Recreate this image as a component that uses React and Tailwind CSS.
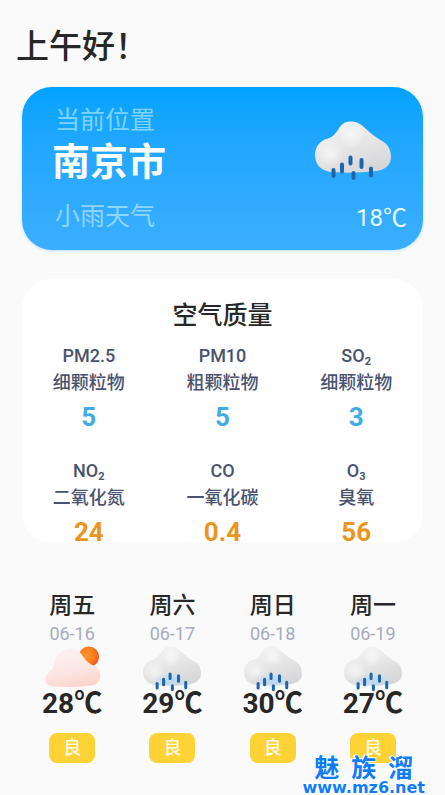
import React from 'react';

const pollutants = [
  { label: 'PM2.5', name: '细颗粒物', value: '5', tone: 'text-[#42abe6]' },
  { label: 'PM10', name: '粗颗粒物', value: '5', tone: 'text-[#42abe6]' },
  { label: 'SO', sub: '2', name: '细颗粒物', value: '3', tone: 'text-[#42abe6]' },
  { label: 'NO', sub: '2', name: '二氧化氮', value: '24', tone: 'text-[#ea951b]' },
  { label: 'CO', name: '一氧化碳', value: '0.4', tone: 'text-[#ea951b]' },
  { label: 'O', sub: '3', name: '臭氧', value: '56', tone: 'text-[#ea951b]' },
];

const days = [
  { day: '周五', date: '06-16', temp: '28', icon: 'sun' },
  { day: '周六', date: '06-17', temp: '29', icon: 'rain' },
  { day: '周日', date: '06-18', temp: '30', icon: 'rain' },
  { day: '周一', date: '06-19', temp: '27', icon: 'rain' },
];

function RainCloud({ id, className, tinted }) {
  return (
    <svg viewBox="0 0 76 60" className={className} aria-hidden="true">
      <defs>
        <linearGradient id={`${id}-body`} x1="0.2" y1="0" x2="0.7" y2="1">
          <stop offset="0" stopColor="#f5f5f5" />
          <stop offset="0.55" stopColor="#e4e4e5" />
          <stop offset="1" stopColor="#d6d6d8" />
        </linearGradient>
        <radialGradient id={`${id}-low`}>
          <stop offset="0" stopColor="#b5d9f5" />
          <stop offset="1" stopColor="#b5d9f5" stopOpacity="0" />
        </radialGradient>
        <radialGradient id={`${id}-puff`}>
          <stop offset="0" stopColor="#ffffff" stopOpacity="0.6" />
          <stop offset="1" stopColor="#ffffff" stopOpacity="0" />
        </radialGradient>
      </defs>
      <path
        d="M15 51 C5 49 0 43 0 34 C0 25 6 19 13 17.500 C18 16 20 13 23 9 C26 3 30 0.500 36 0.500 C42 0.500 46 3 51 8 C56 13 62 17 67 20 C73 23 76 29 76 36 C76 44 70 49 61 50 C46 52 28 52 15 51 Z"
        fill={`url(#${id}-body)`}
      />
      <circle cx="15" cy="33" r="14" fill={`url(#${id}-puff)`} />
      <circle cx="37" cy="14" r="13" fill={`url(#${id}-puff)`} />
      {tinted && <ellipse cx="37" cy="45" rx="24" ry="9" fill={`url(#${id}-low)`} />}
      <path
        d="M18.500 49 v6 M27 43.500 v7 M35.500 36.500 v6 M46.500 39 v7 M38.500 52 v5 M56 47.500 v7"
        fill="none"
        stroke="#1d66ab"
        strokeWidth="4"
        strokeLinecap="round"
      />
    </svg>
  );
}

function SunCloud({ className }) {
  return (
    <svg viewBox="0 0 76 60" className={className} aria-hidden="true">
      <defs>
        <radialGradient id="sun-disc" cx="0.4" cy="0.4" r="0.65">
          <stop offset="0" stopColor="#ff9a2c" />
          <stop offset="0.6" stopColor="#f97a1d" />
          <stop offset="1" stopColor="#f0551f" />
        </radialGradient>
        <linearGradient id="sun-cloud" x1="0.3" y1="0" x2="0.6" y2="1">
          <stop offset="0" stopColor="#fbf3f2" />
          <stop offset="0.6" stopColor="#fce5e2" />
          <stop offset="1" stopColor="#fbd3cb" />
        </linearGradient>
      </defs>
      <circle cx="60" cy="14" r="13.500" fill="url(#sun-disc)" />
      <path
        d="M14 53 C6 52 3 48 3 43 C3 38 7 35 11 31 C15 28 13 23 16 17 C20 8 28 3 37 3 C45 3 49 8 53 14 C57 21 63 24 69 27 C73 29 75 33 75 39 C75 47 69 52 60 52 C45 54 29 54 14 53 Z"
        fill="url(#sun-cloud)"
      />
    </svg>
  );
}

export default function App() {
  return (
    <div className="relative min-h-screen overflow-hidden bg-[#fafafa] font-['Roboto','Noto_Sans_CJK_SC',sans-serif] text-[#272727]">
      <header className="px-4 pt-6">
        <h1 className="text-[33px] leading-[45px] font-medium">上午好！</h1>
      </header>

      <main className="px-[22px] pt-[18px]">
        <section className="flex h-[163px] justify-between rounded-[30px] bg-linear-to-b from-[#00a3ff] to-[#3baeff] pr-4 pl-[30px] shadow-[0_1px_3px_#b5e2ff]">
          <div className="flex flex-col pt-[17px]">
            <p className="pl-[3px] text-[25px] leading-[34px] text-[#7fd3ff]">当前位置</p>
            <h2 className="text-[38px] leading-[48px] font-bold text-white">南京市</h2>
            <p className="mt-[14px] pl-[3px] text-[25px] leading-[34px] text-[#8fd6ff]">小雨天气</p>
          </div>
          <div className="flex flex-col items-end pt-[34px]">
            <RainCloud id="now" className="mr-4 h-[60px] w-[76px]" />
            <p className="mt-5 text-2xl leading-[34px] text-[#e8fbff]">18℃</p>
          </div>
        </section>

        <section className="mt-[29px] h-[264px] rounded-[30px] bg-white pt-5">
          <h2 className="text-center text-[25px] leading-[34px] font-medium">空气质量</h2>
          <div className="mt-[10px] grid grid-cols-3 gap-y-[23px] text-center">
            {pollutants.map((p) => (
              <div key={p.label + p.name} className="flex flex-col text-[#49536f]">
                <p className="text-lg leading-[26px] font-medium">
                  {p.label}
                  {p.sub && <sub className="text-[11px] leading-none font-bold">{p.sub}</sub>}
                </p>
                <p className="text-lg leading-7 font-medium">{p.name}</p>
                <p className={`mt-[2px] text-[26px] leading-9 font-bold ${p.tone}`}>{p.value}</p>
              </div>
            ))}
          </div>
        </section>

        <section className="mt-[46px] grid grid-cols-4">
          {days.map((d) => (
            <div key={d.date} className="flex flex-col items-center">
              <h3 className="text-[23px] leading-[34px] font-medium">{d.day}</h3>
              <p className="text-lg leading-[22px] text-[#a8abbc]">{d.date}</p>
              {d.icon === 'sun' ? (
                <SunCloud className="mt-px h-[46px] w-[58px]" />
              ) : (
                <RainCloud id={`day-${d.date}`} tinted className="mt-px h-[46px] w-[58px]" />
              )}
              <p className="-mt-1 text-[28px] leading-8 font-bold">{d.temp}℃</p>
              <span className="mt-[13px] flex h-[30px] w-[46px] items-center justify-center rounded-lg bg-[#ffd236] text-lg font-medium text-[#fffbe8]">
                良
              </span>
            </div>
          ))}
        </section>
      </main>

      <div className="absolute right-5 bottom-0 flex flex-col items-center text-[#0f7dfa] [-webkit-text-stroke:2px_white] [paint-order:stroke_fill]">
        <div className="flex gap-3 text-[25px] leading-6 font-bold">
          <span>魅</span>
          <span>族</span>
          <span>溜</span>
        </div>
        <a href="#top" className="font-['DejaVu_Sans',sans-serif] text-base leading-[14px] font-bold">
          www.mz6.net
        </a>
      </div>
    </div>
  );
}
